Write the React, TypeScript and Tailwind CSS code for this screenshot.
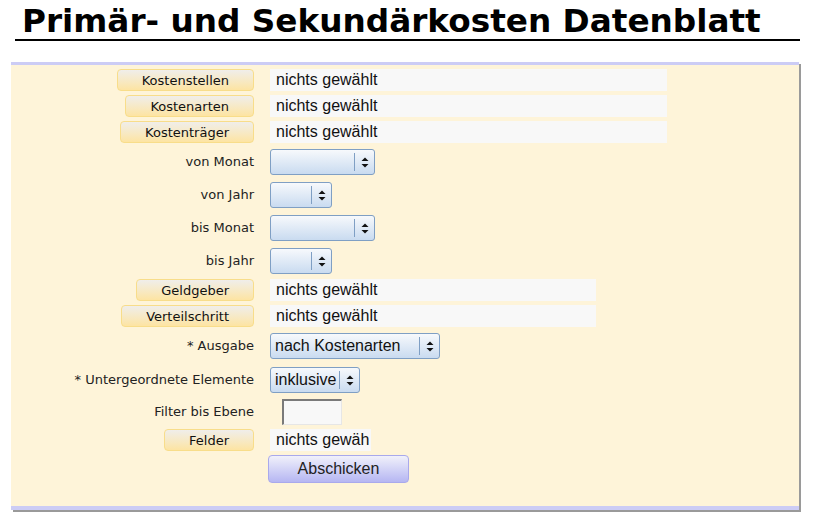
import React from 'react';

type Row =
  | { kind: 'pick'; label: string; width: string; gap: string; text: string }
  | { kind: 'select'; label: string; width: string; value: string; gap: string }
  | { kind: 'input'; label: string; gap: string }
  | { kind: 'submit'; gap: string };

const rows: Row[] = [
  { kind: 'pick', label: 'Kostenstellen', width: 'w-[397px]', gap: 'mt-0', text: 'nichts gewählt' },
  { kind: 'pick', label: 'Kostenarten', width: 'w-[397px]', gap: 'mt-[4px]', text: 'nichts gewählt' },
  { kind: 'pick', label: 'Kostenträger', width: 'w-[397px]', gap: 'mt-[4px]', text: 'nichts gewählt' },
  { kind: 'select', label: 'von Monat', width: 'w-[105px]', value: '', gap: 'mt-[6px]' },
  { kind: 'select', label: 'von Jahr', width: 'w-[62px]', value: '', gap: 'mt-[7px]' },
  { kind: 'select', label: 'bis Monat', width: 'w-[105px]', value: '', gap: 'mt-[7px]' },
  { kind: 'select', label: 'bis Jahr', width: 'w-[62px]', value: '', gap: 'mt-[7px]' },
  { kind: 'pick', label: 'Geldgeber', width: 'w-[326px]', gap: 'mt-[5px]', text: 'nichts gewählt' },
  { kind: 'pick', label: 'Verteilschritt', width: 'w-[326px]', gap: 'mt-[4px]', text: 'nichts gewählt' },
  { kind: 'select', label: '* Ausgabe', width: 'w-[170px]', value: 'nach Kostenarten', gap: 'mt-[6px]' },
  { kind: 'select', label: '* Untergeordnete Elemente', width: 'w-[90px]', value: 'inklusive', gap: 'mt-[8px]' },
  { kind: 'input', label: 'Filter bis Ebene', gap: 'mt-[6px]' },
  // the narrow field only shows the start of the text
  { kind: 'pick', label: 'Felder', width: 'w-[101px]', gap: 'mt-[4px]', text: 'nichts gewäh' },
  { kind: 'submit', gap: 'mt-[4px]' },
];

const labelFont = { fontFamily: '"DejaVu Sans", Verdana, sans-serif' };
const valueFont = { fontFamily: '"Liberation Sans", Arial, sans-serif' };

const Arrows: React.FC = () => (
  <svg width="8" height="11" viewBox="0 0 8 11" className="block">
    <path d="M4 0.5 L7.5 4 L0.5 4 Z" fill="#111" />
    <path d="M0.5 7 L7.5 7 L4 10.5 Z" fill="#111" />
  </svg>
);

const FakeSelect: React.FC<{ width: string; value: string }> = ({ width, value }) => (
  <div
    className={`${width} h-[26px] flex items-center rounded-[3px] border border-[#7f9fc4] bg-gradient-to-b from-[#f7f9fc] to-[#c9dbf0] text-[16px] text-[#111]`}
    style={valueFont}
  >
    <span className="flex-1 pl-[4px] overflow-hidden whitespace-nowrap">{value}</span>
    <span className="h-[18px] w-px bg-[#7f9fc4]" />
    <span className="w-[19px] flex justify-center">
      <Arrows />
    </span>
  </div>
);

const PickButton: React.FC<{ label: string }> = ({ label }) => (
  <button
    className="h-[22px] px-[24px] rounded-[4px] border border-[#f8dd8a] bg-gradient-to-b from-[#f0eeea] to-[#fde4a2] text-[13px] text-[#111] leading-none"
    style={labelFont}
  >
    {label}
  </button>
);

const App: React.FC = () => {
  return (
    <div className="min-h-screen bg-white">
      <h1
        className="ml-[15px] mr-[16px] pl-[7px] pt-[3px] h-[41px] border-b-2 border-black text-[32.7px] font-bold leading-[36px] text-black"
        style={labelFont}
      >
        Primär- und Sekundärkosten Datenblatt
      </h1>

      <div className="ml-[11px] mt-[21px] w-[788px] border-t-[3px] border-b-[4px] border-[#ccccf5] bg-[#fef4d9] pt-[4px] pb-[23px] shadow-[2px_2px_0_#9a9a9a]">
        {rows.map((row, i) => (
          <div key={i} className={`${row.gap} flex items-center`}>
            <div
              className="w-[243px] flex justify-end text-[13px] text-[#222]"
              style={labelFont}
            >
              {row.kind === 'pick' && <PickButton label={row.label} />}
              {(row.kind === 'select' || row.kind === 'input') && (
                <span className="whitespace-nowrap">{row.label}</span>
              )}
            </div>
            <div className="ml-[16px] flex">
              {row.kind === 'pick' && (
                <div
                  className={`${row.width} h-[22px] bg-[#f8f8f8] pl-[6px] text-[16px] leading-[22px] text-[#111] whitespace-nowrap`}
                  style={valueFont}
                >
                  {row.text}
                </div>
              )}
              {row.kind === 'select' && <FakeSelect width={row.width} value={row.value} />}
              {row.kind === 'input' && (
                <div className="ml-[12px] w-[60px] h-[26px] bg-[#f8f8f8] border-t-2 border-l-2 border-t-[#7a7a7a] border-l-[#7a7a7a] border-b border-r border-b-[#e6e6e6] border-r-[#e6e6e6]" />
              )}
              {row.kind === 'submit' && (
                <button
                  className="-ml-[2px] w-[141px] h-[28px] rounded-[4px] border border-[#a9a9ec] bg-gradient-to-b from-[#f1f1fa] to-[#b6b6f2] text-[16px] text-[#222]"
                  style={valueFont}
                >
                  Abschicken
                </button>
              )}
            </div>
          </div>
        ))}
      </div>
    </div>
  );
};

export default App;
